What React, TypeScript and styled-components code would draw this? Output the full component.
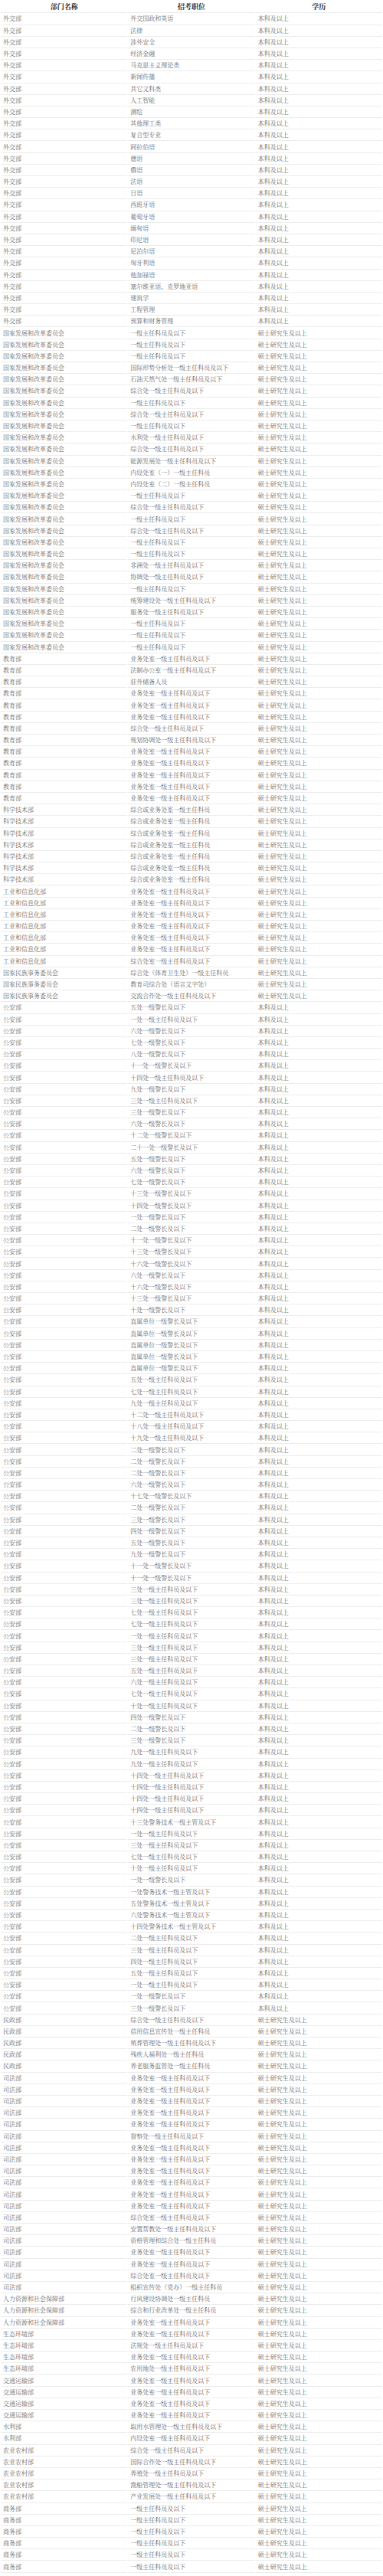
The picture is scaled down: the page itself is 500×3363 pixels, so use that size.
import React from "react";
import styled, { createGlobalStyle } from "styled-components";

const GlobalStyle = createGlobalStyle`
    html, body {
        margin: 0;
        padding: 0;
        background: #fff;
    }
`;

const Table = styled.table`
    width: 500px;
    border-collapse: separate;
    border-spacing: 1px 0;
    table-layout: fixed;
    font-family: "Noto Serif CJK SC", "Noto Sans CJK SC", serif;
`;

const HeadCell = styled.th`
    height: 16.4px;
    padding: 0;
    font-size: 9px;
    font-weight: 700;
    color: #222;
    text-align: center;
    border-bottom: 1px solid #ececec;
`;

const Cell = styled.td`
    height: 14.2px;
    padding: 0 0 0 3px;
    font-size: 8px;
    line-height: 14px;
    color: #666;
    white-space: nowrap;
    overflow: hidden;
    text-overflow: clip;
    border-bottom: 1px solid #ececec;
`;

type Row = [string, string];

const FA = "外交部";
const FG = "国家发展和改革委员会";
const JY = "教育部";
const KJ = "科学技术部";
const GX = "工业和信息化部";
const MW = "国家民族事务委员会";
const GA = "公安部";
const MZ = "民政部";
const SF = "司法部";
const RS = "人力资源和社会保障部";
const ST = "生态环境部";
const JT = "交通运输部";
const SL = "水利部";
const NY = "农业农村部";
const SW = "商务部";

const BK = "本科及以上";
const SS = "硕士研究生及以上";

// education required, by department
const eduOf: Record<string, string> = {
    [FA]: BK,
    [FG]: SS,
    [JY]: SS,
    [KJ]: SS,
    [GX]: SS,
    [MW]: SS,
    [GA]: BK,
    [MZ]: SS,
    [SF]: SS,
    [RS]: SS,
    [ST]: SS,
    [JT]: SS,
    [SL]: SS,
    [NY]: SS,
    [SW]: SS,
};

const KY = "一级主任科员及以下";
const WZ = "处一级警长及以下";
const KZ = "处一级主任科员及以下";
const YW = "业务处室一级主任科员及以下";

const rows: Row[] = [
    [FA, "外交国政和英语"],
    [FA, "法律"],
    [FA, "涉外安全"],
    [FA, "经济金融"],
    [FA, "马克思主义理论类"],
    [FA, "新闻传播"],
    [FA, "其它文科类"],
    [FA, "人工智能"],
    [FA, "测绘"],
    [FA, "其他理工类"],
    [FA, "复合型专业"],
    [FA, "阿拉伯语"],
    [FA, "德语"],
    [FA, "俄语"],
    [FA, "法语"],
    [FA, "日语"],
    [FA, "西班牙语"],
    [FA, "葡萄牙语"],
    [FA, "缅甸语"],
    [FA, "印尼语"],
    [FA, "尼泊尔语"],
    [FA, "匈牙利语"],
    [FA, "他加禄语"],
    [FA, "塞尔维亚语、克罗地亚语"],
    [FA, "建筑学"],
    [FA, "工程管理"],
    [FA, "预算和财务管理"],
    [FG, KY],
    [FG, KY],
    [FG, KY],
    [FG, "国际形势分析处一级主任科员及以下"],
    [FG, "石油天然气处一级主任科员及以下"],
    [FG, "综合处一级主任科员及以下"],
    [FG, KY],
    [FG, "综合处一级主任科员及以下"],
    [FG, KY],
    [FG, "水利处一级主任科员及以下"],
    [FG, "综合处一级主任科员及以下"],
    [FG, "能源发展处一级主任科员及以下"],
    [FG, "内设处室（一）一级主任科员"],
    [FG, "内设处室（二）一级主任科员"],
    [FG, KY],
    [FG, "综合处一级主任科员及以下"],
    [FG, KY],
    [FG, "综合处一级主任科员及以下"],
    [FG, KY],
    [FG, KY],
    [FG, "非洲处一级主任科员及以下"],
    [FG, "协调处一级主任科员及以下"],
    [FG, KY],
    [FG, "统筹建设处一级主任科员及以下"],
    [FG, "服务处一级主任科员及以下"],
    [FG, KY],
    [FG, KY],
    [FG, KY],
    [JY, YW],
    [JY, "法制办公室一级主任科员及以下"],
    [JY, "驻外储备人员"],
    [JY, YW],
    [JY, YW],
    [JY, YW],
    [JY, "综合处一级主任科员及以下"],
    [JY, "规划协调处一级主任科员及以下"],
    [JY, YW],
    [JY, YW],
    [JY, YW],
    [JY, YW],
    [JY, YW],
    [KJ, "综合或业务处室一级主任科员"],
    [KJ, "综合或业务处室一级主任科员"],
    [KJ, "综合或业务处室一级主任科员"],
    [KJ, "综合或业务处室一级主任科员"],
    [KJ, "综合或业务处室一级主任科员"],
    [KJ, "综合或业务处室一级主任科员"],
    [KJ, "综合或业务处室一级主任科员"],
    [GX, YW],
    [GX, YW],
    [GX, YW],
    [GX, YW],
    [GX, YW],
    [GX, YW],
    [GX, "综合处室一级主任科员及以下"],
    [MW, "综合处（体育卫生处）一级主任科员"],
    [MW, "教育司综合处（语言文字处）"],
    [MW, "交流合作处一级主任科员及以下"],
    [GA, "五" + WZ],
    [GA, "一" + KZ],
    [GA, "六" + WZ],
    [GA, "七" + WZ],
    [GA, "八" + WZ],
    [GA, "十一" + WZ],
    [GA, "十四" + KZ],
    [GA, "九" + WZ],
    [GA, "三" + KZ],
    [GA, "三" + WZ],
    [GA, "六" + WZ],
    [GA, "十二" + WZ],
    [GA, "二十一" + WZ],
    [GA, "五" + WZ],
    [GA, "六" + WZ],
    [GA, "七" + WZ],
    [GA, "十三" + WZ],
    [GA, "十四" + WZ],
    [GA, "一" + WZ],
    [GA, "二" + WZ],
    [GA, "十一" + WZ],
    [GA, "十三" + WZ],
    [GA, "十六" + WZ],
    [GA, "六" + WZ],
    [GA, "十六" + WZ],
    [GA, "十三" + WZ],
    [GA, "十" + WZ],
    [GA, "直属单位一级警长及以下"],
    [GA, "直属单位一级警长及以下"],
    [GA, "直属单位一级警长及以下"],
    [GA, "直属单位一级警长及以下"],
    [GA, "直属单位一级警长及以下"],
    [GA, "五" + KZ],
    [GA, "七" + KZ],
    [GA, "九" + KZ],
    [GA, "十二" + KZ],
    [GA, "十八" + KZ],
    [GA, "十九" + KZ],
    [GA, "二" + WZ],
    [GA, "二" + WZ],
    [GA, "二" + WZ],
    [GA, "六" + WZ],
    [GA, "十七" + WZ],
    [GA, "二" + WZ],
    [GA, "三" + WZ],
    [GA, "四" + WZ],
    [GA, "五" + WZ],
    [GA, "九" + WZ],
    [GA, "十一" + WZ],
    [GA, "十一" + WZ],
    [GA, "三" + KZ],
    [GA, "三" + KZ],
    [GA, "七" + KZ],
    [GA, "七" + KZ],
    [GA, "一" + KZ],
    [GA, "三" + KZ],
    [GA, "三" + KZ],
    [GA, "五" + KZ],
    [GA, "六" + KZ],
    [GA, "七" + KZ],
    [GA, "十" + KZ],
    [GA, "四" + WZ],
    [GA, "二" + WZ],
    [GA, "三" + WZ],
    [GA, "九" + KZ],
    [GA, "九" + KZ],
    [GA, "十四" + KZ],
    [GA, "十四" + KZ],
    [GA, "十四" + KZ],
    [GA, "十四" + KZ],
    [GA, "十三处警务技术一级主管及以下"],
    [GA, "一" + KZ],
    [GA, "三" + KZ],
    [GA, "七" + KZ],
    [GA, "十" + KZ],
    [GA, "一" + WZ],
    [GA, "一处警务技术一级主管及以下"],
    [GA, "五处警务技术一级主管及以下"],
    [GA, "六处警务技术一级主管及以下"],
    [GA, "十四处警务技术一级主管及以下"],
    [GA, "二" + KZ],
    [GA, "三" + KZ],
    [GA, "四" + KZ],
    [GA, "五" + KZ],
    [GA, "一" + KZ],
    [GA, "一" + WZ],
    [GA, "三" + WZ],
    [MZ, "综合处一级主任科员及以下"],
    [MZ, "信用信息宣传处一级主任科员"],
    [MZ, "殡葬管理处一级主任科员及以下"],
    [MZ, "残疾人福利处一级主任科员"],
    [MZ, "养老服务监管处一级主任科员"],
    [SF, YW],
    [SF, YW],
    [SF, YW],
    [SF, YW],
    [SF, YW],
    [SF, "督察处一级主任科员及以下"],
    [SF, YW],
    [SF, YW],
    [SF, YW],
    [SF, YW],
    [SF, YW],
    [SF, YW],
    [SF, "综合处室一级主任科员及以下"],
    [SF, "安置帮教处一级主任科员及以下"],
    [SF, "资格管理和综合处一级主任科员"],
    [SF, YW],
    [SF, YW],
    [SF, "综合处室一级主任科员及以下"],
    [SF, "组织宣传处（党办）一级主任科员"],
    [RS, "行风建设协调处一级主任科员"],
    [RS, "综合和行业改革处一级主任科员"],
    [RS, YW],
    [ST, YW],
    [ST, "法规处一级主任科员及以下"],
    [ST, YW],
    [ST, "农用地处一级主任科员及以下"],
    [JT, YW],
    [JT, YW],
    [JT, YW],
    [JT, YW],
    [SL, "取用水管理处一级主任科员及以下"],
    [SL, "内设处室一级主任科员及以下"],
    [NY, "综合处一级主任科员及以下"],
    [NY, "国际合作处一级主任科员及以下"],
    [NY, "养殖处一级主任科员及以下"],
    [NY, "渔船管理处一级主任科员及以下"],
    [NY, "产业发展处一级主任科员及以下"],
    [SW, KY],
    [SW, KY],
    [SW, KY],
    [SW, KY],
    [SW, KY],
    [SW, KY],
];

const App: React.FC = () => {
    return (
        <>
            <GlobalStyle />
            <Table>
                <thead>
                    <tr>
                        <HeadCell>部门名称</HeadCell>
                        <HeadCell>招考职位</HeadCell>
                        <HeadCell>学历</HeadCell>
                    </tr>
                </thead>
                <tbody>
                    {rows.map((row, i) => (
                        <tr key={i}>
                            <Cell>{row[0]}</Cell>
                            <Cell>{row[1]}</Cell>
                            <Cell>{eduOf[row[0]]}</Cell>
                        </tr>
                    ))}
                </tbody>
            </Table>
        </>
    );
};

export default App;
